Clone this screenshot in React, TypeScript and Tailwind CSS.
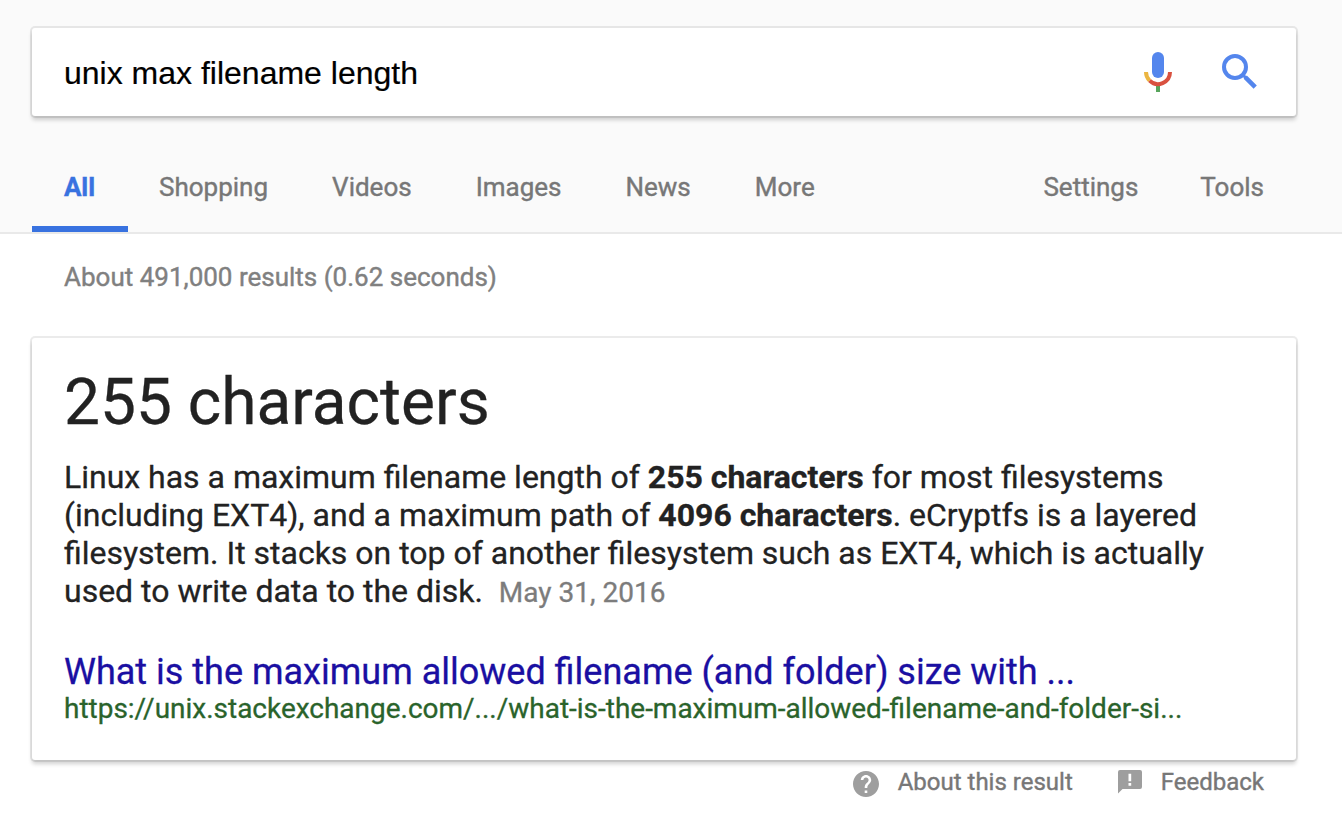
const tabs = ["Shopping", "Videos", "Images", "News", "More"];

function MicIcon() {
  return (
    <svg viewBox="0 0 28 40" className="h-10 w-7" fill="none" strokeWidth="4">
      <rect x="8" y="0" width="12" height="26" rx="6" fill="#5486ed" />
      <rect x="12" y="33" width="4" height="7" fill="#58a55c" />
      <path d="M2 20A12 12 0 0 0 5.600 28.600" stroke="#ebb541" />
      <path d="M5.600 28.600A12 12 0 0 0 26 20" stroke="#d95140" />
    </svg>
  );
}

function SearchIcon() {
  return (
    <svg viewBox="0 0 35 35" className="relative -top-px ml-[50px] h-[35px] w-[35px]" fill="none" stroke="#5486ed">
      <circle cx="13" cy="13" r="11" strokeWidth="4" />
      <path d="M20.500 20.500L24 24" strokeWidth="3" />
      <path d="M23.200 23.200L33.200 33.200" strokeWidth="4.500" />
    </svg>
  );
}

function HelpIcon() {
  return (
    <svg viewBox="2 2 20 20" className="relative top-0.5 mr-[19px] h-[26px] w-[26px]" fill="#9e9e9e">
      <path d="M12 2C6.480 2 2 6.480 2 12s4.480 10 10 10 10-4.480 10-10S17.520 2 12 2zm1 17h-2v-2h2v2zm2.070-7.750l-.9.920C13.450 12.900 13 13.500 13 15h-2v-.5c0-1.100.45-2.100 1.170-2.830l1.240-1.260c.37-.36.59-.86.59-1.410 0-1.100-.9-2-2-2s-2 .9-2 2H8c0-2.210 1.790-4 4-4s4 1.790 4 4c0 .88-.36 1.680-.93 2.250z" />
    </svg>
  );
}

function FeedbackIcon() {
  return (
    <svg viewBox="0 0 24 24" className="ml-[45px] mr-[19px] h-6 w-6">
      <path d="M2 0H22Q24 0 24 2V17Q24 19 22 19H4.500L0 23.500V2Q0 0 2 0Z" fill="#9e9e9e" />
      <path d="M10.500 3.700H13.200V11.300H10.500ZM10.500 13H13.200V15.700H10.500Z" fill="#fff" />
    </svg>
  );
}

export default function App() {
  return (
    <div className="h-[830px] w-[1342px] overflow-hidden bg-white font-[Roboto,sans-serif] text-[#222]">
      <header className="h-[234px] border-b-2 border-[#e9e9e9] bg-[#fafafa] pl-8 pr-[46px] pt-7">
        <div className="flex h-[88px] items-center rounded-[3px] bg-white pl-8 pr-[39px] shadow-[0_0_0_2px_rgba(0,0,0,0.08),0_4px_4px_rgba(0,0,0,0.18)]">
          <span className="grow pt-0.5 font-['Liberation_Sans',sans-serif] text-[32px] text-black [-webkit-text-stroke:0.2px]">unix max filename length</span>
          <MicIcon />
          <SearchIcon />
        </div>
        <nav className="mt-7 flex h-[88px] pr-8 text-[26px] leading-[86px] text-[#777] [-webkit-text-stroke:0.4px]">
          <span className="mr-[-33px] h-[88px] w-24 border-b-6 border-[#3872e0] pr-px text-center font-bold text-[#3872e0]">All</span>
          {tabs.map((tab) => (
            <span key={tab} className="ml-16">{tab}</span>
          ))}
          <span className="ml-auto">Settings</span>
          <span className="ml-[62px]">Tools</span>
        </nav>
      </header>
      <main className="pl-8 pr-[46px]">
        <p className="h-[104px] pl-8 text-[26px] leading-[86px] text-[#808080] [-webkit-text-stroke:0.4px]">About 491,000 results (0.62 seconds)</p>
        <article className="h-[422px] rounded-[3px] bg-white pl-8 pt-[25px] shadow-[0_0_0_2px_rgba(0,0,0,0.08),0_4px_4px_rgba(0,0,0,0.18)] [-webkit-text-stroke:0.3px]">
          <h1 className="h-[95px] text-[64px] leading-[80px]">255 characters</h1>
          <div className="whitespace-nowrap text-[31.990px] leading-[38px]">
            <p>Linux has a maximum filename length of <b>255 characters</b> for most filesystems</p>
            <p>(including EXT4), and a maximum path of <b>4096 characters</b>. eCryptfs is a layered</p>
            <p>filesystem. It stacks on top of another filesystem such as EXT4, which is actually</p>
            <p>used to write data to the disk. <span className="ml-2 text-[28px] text-[#7c7c7c]">May 31, 2016</span></p>
          </div>
          <h2 className="mt-[37px] text-[36px] leading-[46px] text-[#1a0fa2]">What is the maximum allowed filename (and folder) size with ...</h2>
          <p className="whitespace-nowrap text-[27.980px] leading-[28px] text-[#2a632b]">https://unix.stackexchange.com/.../what-is-the-maximum-allowed-filename-and-folder-si...</p>
        </article>
        <footer className="flex h-[44px] items-center justify-end pr-8 text-[24px] text-[#777] [-webkit-text-stroke:0.4px]">
          <HelpIcon />
          <span>About this result</span>
          <FeedbackIcon />
          <span>Feedback</span>
        </footer>
      </main>
    </div>
  );
}
